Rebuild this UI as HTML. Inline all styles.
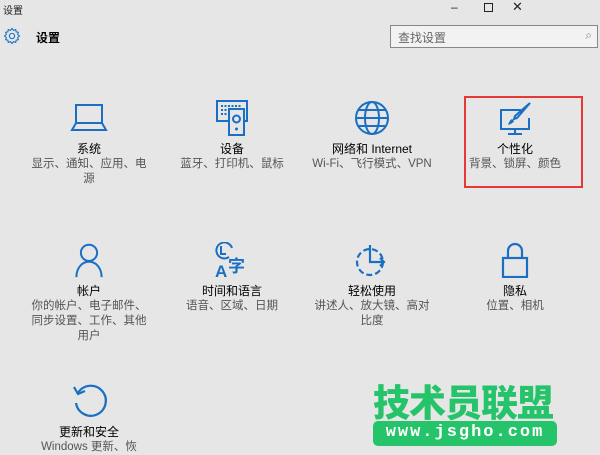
<!DOCTYPE html>
<html><head><meta charset="utf-8"><style>
*{margin:0;padding:0;box-sizing:border-box}
body{width:600px;height:445px;overflow:hidden;background:#e6e6e6;font-family:"Liberation Sans","Noto Sans CJK SC",sans-serif;position:relative;color:#000}
.a{position:absolute}
.item{position:absolute;width:130px;text-align:center}
.item svg{display:block;margin:0 auto}
.t{font-size:12px;color:#000;margin-top:6px;line-height:15px}
.s{font-size:11.5px;color:#555;line-height:15px}
</style></head><body>
<div class="a" style="left:3px;top:2px;font-size:10px;color:#222">设置</div>
<div class="a" style="left:451px;top:0px;font-size:12px;color:#222">–</div>
<div class="a" style="left:484px;top:3px;width:9px;height:9px;border:1px solid #222"></div>
<div class="a" style="left:512px;top:-1px;font-size:13px;color:#222">✕</div>
<svg class="a" style="left:3px;top:27px" width="18" height="18" viewBox="0 0 24 24"><path d="M12 2l2 2.5 3-1 .5 3 3 .5-1 3L22 12l-2.5 2 1 3-3 .5-.5 3-3-1L12 22l-2-2.5-3 1-.5-3-3-.5 1-3L2 12l2.5-2-1-3 3-.5.5-3 3 1z" fill="none" stroke="#1a6fc4" stroke-width="1.4"/><circle cx="12" cy="12" r="3.5" fill="none" stroke="#1a6fc4" stroke-width="1.4"/></svg>
<div class="a" style="left:36px;top:29px;font-size:12px;font-weight:bold">设置</div>
<div class="a" style="left:390px;top:25px;width:208px;height:23px;border:1px solid #888;background:#f2f2f2;font-size:12px;color:#666;padding:3px 7px">查找设置<span style="position:absolute;right:5px;top:2px;color:#888">⌕</span></div>

<div class="a" style="left:464px;top:96px;width:119px;height:92px;border:2px solid #e53935"></div>

<div class="item" style="left:24px;top:100px">
<svg width="40" height="36" viewBox="0 0 40 36"><rect x="7" y="5" width="26" height="18" fill="none" stroke="#1a6fc4" stroke-width="2"/><path d="M3 30h34l-4-7H7z" fill="none" stroke="#1a6fc4" stroke-width="2"/></svg>
<div class="t">系统</div><div class="s">显示、通知、应用、电<br>源</div></div>

<div class="item" style="left:167px;top:100px">
<svg width="40" height="36" viewBox="0 0 40 36"><rect x="5" y="1" width="30" height="20" fill="none" stroke="#1a6fc4" stroke-width="2"/><rect x="17" y="9" width="15" height="26" fill="#e6e6e6" stroke="#1a6fc4" stroke-width="2"/><circle cx="24.5" cy="19" r="3.5" fill="none" stroke="#1a6fc4" stroke-width="2"/><circle cx="24.5" cy="29" r="1.5" fill="#1a6fc4"/><path d="M9 6h20M9 10h6M9 14h6" stroke="#1a6fc4" stroke-width="2" stroke-dasharray="2 1.5"/></svg>
<div class="t">设备</div><div class="s">蓝牙、打印机、鼠标</div></div>

<div class="item" style="left:307px;top:100px">
<svg width="40" height="36" viewBox="0 0 40 36"><circle cx="20" cy="18" r="16" fill="none" stroke="#1a6fc4" stroke-width="2"/><ellipse cx="20" cy="18" rx="7" ry="16" fill="none" stroke="#1a6fc4" stroke-width="2"/><path d="M4 18h32M6 10h28M6 26h28" stroke="#1a6fc4" stroke-width="2"/></svg>
<div class="t">网络和 Internet</div><div class="s">Wi-Fi、飞行模式、VPN</div></div>

<div class="item" style="left:450px;top:100px">
<svg width="40" height="36" viewBox="0 0 40 36"><path d="M26 10H6v19h28V18" fill="none" stroke="#1a6fc4" stroke-width="2"/><path d="M20 29v5M13 34h14" stroke="#1a6fc4" stroke-width="2"/><path d="M35 3L22 18l-3 1 1-3z" fill="none" stroke="#1a6fc4" stroke-width="2"/><path d="M17 19c-2 1-3 3-4 6 3-1 5-2 6-4" fill="#1a6fc4"/></svg>
<div class="t">个性化</div><div class="s">背景、锁屏、颜色</div></div>

<div class="item" style="left:24px;top:242px">
<svg width="40" height="36" viewBox="0 0 40 40"><circle cx="20" cy="12" r="9" fill="none" stroke="#1a6fc4" stroke-width="2.2"/><path d="M6 39c0-10 6-17 14-17s14 7 14 17" fill="none" stroke="#1a6fc4" stroke-width="2.2"/></svg>
<div class="t">帐户</div><div class="s">你的帐户、电子邮件、<br>同步设置、工作、其他<br>用户</div></div>

<div class="item" style="left:167px;top:242px">
<svg width="40" height="36" viewBox="0 0 40 36"><path d="M17 15A8 8 0 1 1 20 6" fill="none" stroke="#1a6fc4" stroke-width="2"/><path d="M9 4v8h5" fill="none" stroke="#1a6fc4" stroke-width="2"/><text x="3" y="35" font-size="17" font-weight="bold" fill="#1a6fc4" font-family="Liberation Sans">A</text><text x="16" y="30" font-size="17" font-weight="bold" fill="#1a6fc4" font-family="Noto Sans CJK SC">字</text></svg>
<div class="t">时间和语言</div><div class="s">语音、区域、日期</div></div>

<div class="item" style="left:307px;top:242px">
<svg width="40" height="36" viewBox="0 0 40 36"><circle cx="18" cy="20" r="13" fill="none" stroke="#1a6fc4" stroke-width="2.2" stroke-dasharray="6 3"/><path d="M18 3v17h14M28 16l4 4-4 4" fill="none" stroke="#1a6fc4" stroke-width="2.2"/></svg>
<div class="t">轻松使用</div><div class="s">讲述人、放大镜、高对<br>比度</div></div>

<div class="item" style="left:450px;top:242px">
<svg width="40" height="36" viewBox="0 0 40 36"><path d="M13 16V9a7 7 0 0 1 14 0v7" fill="none" stroke="#1a6fc4" stroke-width="2.2"/><rect x="8" y="16" width="24" height="19" fill="none" stroke="#1a6fc4" stroke-width="2.2"/></svg>
<div class="t">隐私</div><div class="s">位置、相机</div></div>

<div class="item" style="left:24px;top:383px">
<svg width="40" height="36" viewBox="0 0 40 36"><path d="M9 10A15 15 0 1 1 7 20" fill="none" stroke="#1a6fc4" stroke-width="2.2"/><path d="M5 4l4 7 7-3" fill="none" stroke="#1a6fc4" stroke-width="2.2"/></svg>
<div class="t">更新和安全</div><div class="s">Windows 更新、恢</div></div>

<div class="a" style="left:373px;top:380px;font-size:37px;font-weight:900;color:#26c46a;letter-spacing:-1px;line-height:40px;font-family:'Noto Sans CJK SC',sans-serif">技术员联盟</div>
<div class="a" style="left:373px;top:421px;width:184px;height:25px;background:#26c46a;border-radius:5px;color:#fff;font-size:17px;font-weight:bold;text-align:center;line-height:24px;letter-spacing:2px;font-family:'Liberation Mono',monospace">www.jsgho.com</div>
</body></html>
